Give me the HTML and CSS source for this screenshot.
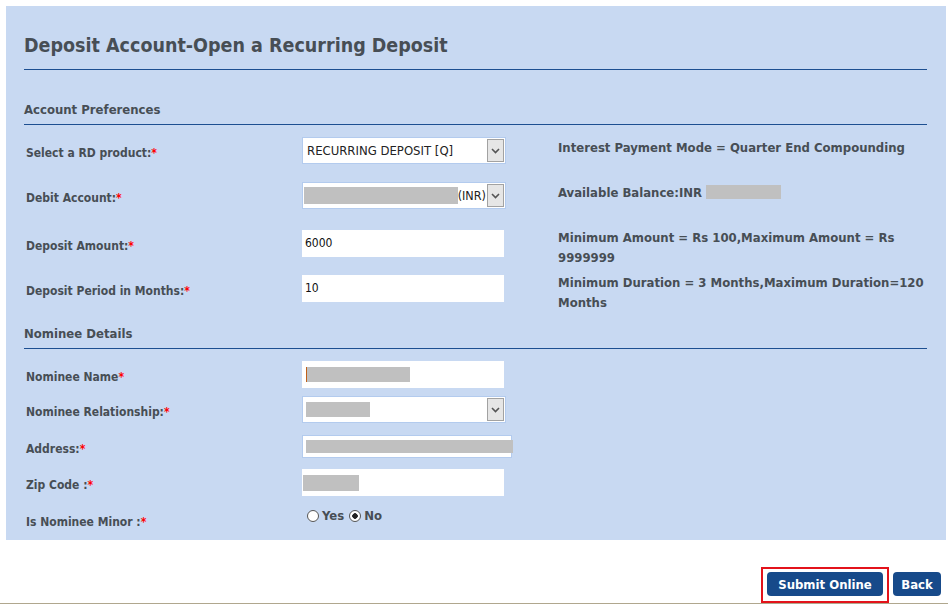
FILE: index.html
```html
<!DOCTYPE html>
<html lang="en">
<head>
    <meta charset="UTF-8">
    <title>Deposit Account-Open a Recurring Deposit</title>
    <link rel="stylesheet" href="styles.css">
</head>
<body>
    <div class="page">
        <div class="panel">
            <h1>Deposit Account-Open a Recurring Deposit</h1>

            <!-- Account preferences -->
            <h2>Account Preferences</h2>
            <div class="row">
                <div class="label">Select a RD product:<span class="req">*</span></div>
                <div class="field">
                    <div class="select">
                        <span class="select-text">RECURRING DEPOSIT [Q]</span>
                        <span class="select-arrow"><svg width="9" height="6" viewBox="0 0 9 6"><path d="M1 1l3.5 3.5L8 1" fill="none" stroke="#555" stroke-width="1.6"/></svg></span>
                    </div>
                </div>
                <div class="info">Interest Payment Mode = Quarter End Compounding</div>
            </div>
            <div class="row">
                <div class="label">Debit Account:<span class="req">*</span></div>
                <div class="field">
                    <div class="select">
                        <span class="select-text debit"><span class="mask mask-debit"></span>(INR)</span>
                        <span class="select-arrow"><svg width="9" height="6" viewBox="0 0 9 6"><path d="M1 1l3.5 3.5L8 1" fill="none" stroke="#555" stroke-width="1.6"/></svg></span>
                    </div>
                </div>
                <div class="info">Available Balance:INR <span class="mask mask-balance"></span></div>
            </div>
            <div class="row">
                <div class="label">Deposit Amount:<span class="req">*</span></div>
                <div class="field"><input class="text" type="text" value="6000"></div>
                <div class="info">Minimum Amount = Rs 100,Maximum Amount = Rs 9999999</div>
            </div>
            <div class="row">
                <div class="label">Deposit Period in Months:<span class="req">*</span></div>
                <div class="field"><input class="text" type="text" value="10"></div>
                <div class="info">Minimum Duration = 3 Months,Maximum Duration=120 Months</div>
            </div>

            <!-- Nominee -->
            <h2 class="nominee-head">Nominee Details</h2>
            <div class="row short">
                <div class="label">Nominee Name<span class="req">*</span></div>
                <div class="field"><div class="text fake"><span class="mask mask-name"></span></div></div>
            </div>
            <div class="row short">
                <div class="label">Nominee Relationship:<span class="req">*</span></div>
                <div class="field">
                    <div class="select">
                        <span class="select-text"><span class="mask mask-rel"></span></span>
                        <span class="select-arrow"><svg width="9" height="6" viewBox="0 0 9 6"><path d="M1 1l3.5 3.5L8 1" fill="none" stroke="#555" stroke-width="1.6"/></svg></span>
                    </div>
                </div>
            </div>
            <div class="row address">
                <div class="label">Address:<span class="req">*</span></div>
                <div class="field"><div class="text fake wide"><span class="mask mask-addr"></span></div></div>
            </div>
            <div class="row short">
                <div class="label">Zip Code :<span class="req">*</span></div>
                <div class="field"><div class="text fake"><span class="mask mask-zip"></span></div></div>
            </div>
            <div class="row minor">
                <div class="label">Is Nominee Minor :<span class="req">*</span></div>
                <div class="field radios">
                    <label><input type="radio" name="minor"> Yes</label>
                    <label><input type="radio" name="minor" checked> No</label>
                </div>
            </div>
        </div>

        <div class="actions">
            <div class="focus-box"><button class="btn">Submit Online</button></div>
            <button class="btn back">Back</button>
        </div>
    </div>
</body>
</html>
```

FILE: styles.css
```css
body {
    margin: 0;
    font-family: "DejaVu Sans Condensed", "DejaVu Sans", sans-serif;
    color: #474e55;
    background: #fff;
}

.page {
    padding: 6px 2px 0 6px;
}

.panel {
    background-color: #c8d9f2;
    padding: 28px 19px 0 18px;
    height: 506px;
}

h1 {
    margin: 0;
    font-size: 19.5px;
    line-height: 24px;
    padding-bottom: 11px;
    border-bottom: 1px solid #1d4f91;
}

h2 {
    margin: 32px 0 0;
    font-size: 13px;
    line-height: 16px;
    padding-bottom: 6px;
    border-bottom: 1px solid #1d4f91;
}

h2.nominee-head {
    margin-top: 18px;
}

.row {
    display: grid;
    grid-template-columns: 278px 256px 1fr;
    height: 45px;
    align-items: center;
}

h2 + .row {
    margin-top: 3px;
}

h2.nominee-head + .row {
    margin-top: 8px;
}

.row.short { height: 35px; }
.row.address { height: 38px; }
.row.minor { height: 39px; }

.label {
    font-size: 12px;
    font-weight: bold;
    padding-left: 2px;
    margin-top: 5px;
}

.req {
    color: #f00;
}

.info {
    align-self: start;
    padding-top: 10px;
    font-size: 13px;
    font-weight: bold;
    line-height: 20px;
}

.select {
    display: flex;
    width: 204px;
    height: 27px;
    box-sizing: border-box;
    border: 1px solid #b3cbee;
    background: #fff;
}

.select-text {
    flex: 1;
    display: flex;
    align-items: center;
    padding-left: 4px;
    font-size: 13px;
    color: #222;
    overflow: hidden;
    white-space: nowrap;
}

.select-text.debit {
    padding-left: 1px;
    font-size: 12.5px;
}

.select-arrow {
    width: 15px;
    margin: 1px;
    display: flex;
    align-items: center;
    justify-content: center;
    background: #e6e6e6;
    border: 1px solid #a2a2a2;
}

.text {
    display: block;
    width: 202px;
    height: 27px;
    box-sizing: border-box;
    border: none;
    padding: 0 3px;
    font-family: inherit;
    font-size: 12px;
    color: #111;
    background: #fff;
    outline: none;
}

.fake {
    display: flex;
    align-items: center;
    overflow: visible;
}

.fake.wide {
    width: 210px;
    height: 23px;
    border: 1px solid #b3cbee;
    padding-left: 3px;
}

.mask {
    display: inline-block;
    background: #c0c0c0;
}

.mask-debit { width: 155px; height: 17px; }
.mask-balance { width: 75px; height: 14px; vertical-align: -2px; }
.mask-name { width: 103px; height: 15px; margin-left: 1px; border-left: 1px solid #c0601a; }
.mask-rel { width: 64px; height: 15px; margin-left: -1px; }
.mask-addr { width: 207px; height: 13px; flex: none; }
.mask-zip { width: 56px; height: 16px; margin-left: -2px; }

.radios {
    align-self: start;
    padding-top: 8px;
    padding-left: 5px;
    font-size: 13px;
    font-weight: bold;
    display: flex;
    gap: 5px;
}

.radios label {
    display: flex;
    align-items: center;
    gap: 3px;
}

.radios input {
    appearance: none;
    margin: 0;
    width: 12px;
    height: 12px;
    border: 1px solid #555;
    border-radius: 50%;
    background: #fff;
    box-sizing: border-box;
}

.radios input:checked {
    background: radial-gradient(circle, #222 0 2.5px, #fff 3px);
}

.actions {
    display: flex;
    justify-content: flex-end;
    align-items: flex-start;
    gap: 4px;
    padding: 27px 7px 0 0;
    height: 36px;
    margin: 0 -2px 0 -6px;
    border-bottom: 1px solid #b0a78e;
}

.focus-box {
    border: 2px solid #e3131b;
    padding: 3px 4px 5px;
}

.btn {
    height: 24px;
    padding: 0 10px;
    border: none;
    border-radius: 4px;
    background-color: #174a8a;
    color: #fff;
    font-family: inherit;
    font-size: 13px;
    font-weight: bold;
    cursor: pointer;
    width: 116px;
}

.btn.back {
    width: 48px;
    padding: 0;
    margin-top: 5px;
}
```
